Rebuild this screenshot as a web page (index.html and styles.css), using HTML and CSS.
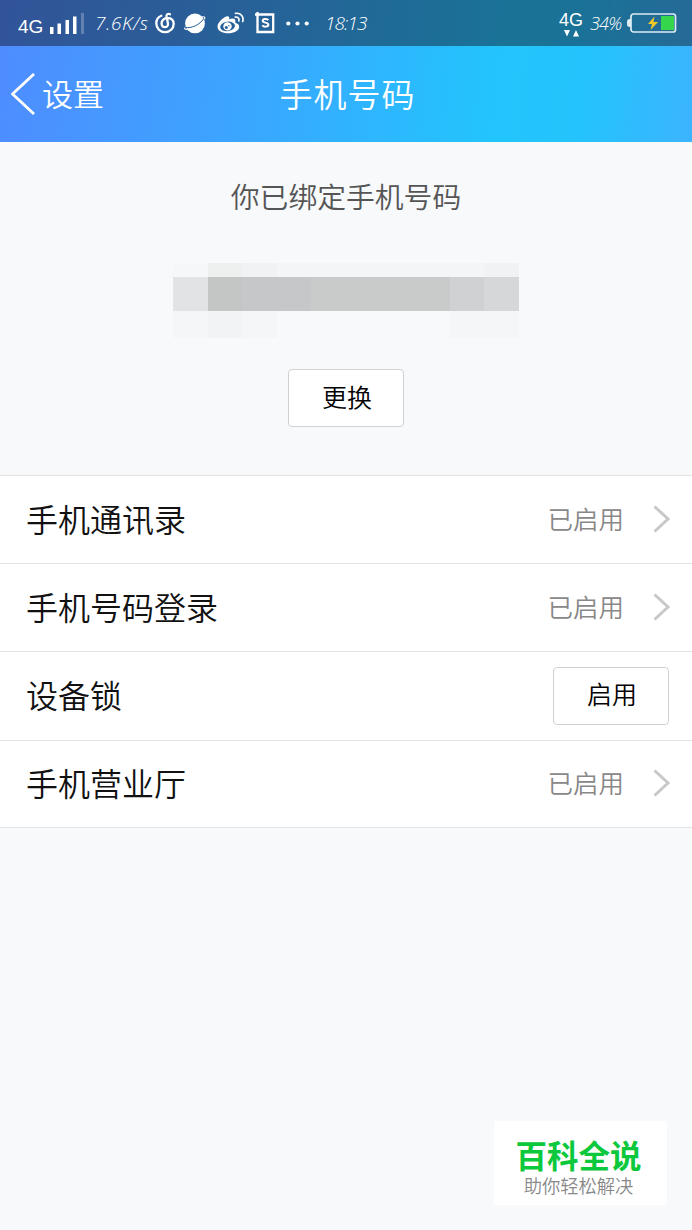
FILE: index.html
```html
<!DOCTYPE html>
<html lang="zh-CN">
<head>
    <meta charset="UTF-8">
    <meta name="viewport" content="width=device-width, initial-scale=1.0">
    <title>手机号码</title>
    <link rel="stylesheet" href="styles.css">
</head>
<body>
    <header class="top">
        <div class="status-bar">
            <div class="status-left">
                <span class="network">4G</span>
                <svg class="signal" width="34" height="22" viewBox="0 0 34 22">
                    <path fill="#fff" d="M0 14h3.500v7H0zM7.500 10.500H11V21H7.500zM15.500 7H19v14h-3.500zM23 3.500h3.500V21H23z"/>
                    <path fill="#fff" opacity=".25" d="M31 0h3v21h-3z"/>
                </svg>
                <span class="speed">7.6K/s</span>
                <svg class="icon-music" width="20" height="22" viewBox="0 0 20 22" fill="none" stroke="#fff" stroke-linecap="round">
                    <path stroke-width="2.300" d="M6.300 3.800C3.200 5 1.300 8.100 1.300 11.600c0 4.900 3.900 8.600 8.700 8.600s8.700-3.700 8.700-8.500c0-3.300-2.300-5.700-6-5.700C9 6 6.600 8.500 6.600 11.300c0 2.200 1.300 3.900 3.300 3.900 2.200 0 3.400-1.600 3-3.900L11.500 4.300c-.3-1.800 1.500-3.200 3.500-2.100"/>
                </svg>
                <svg class="icon-planet" width="22" height="21" viewBox="0 0 22 21">
                    <circle cx="11" cy="10.400" r="9.900" fill="#fff"/>
                    <path fill="none" stroke="#235f99" stroke-width="1" d="M.8 14.300c6.500 1.700 15.200-2.800 18.900-8.600"/>
                    <path fill="none" stroke="#fff" stroke-width="1.200" d="M1 14.500c-1 2 1 2 3 1.700M18 4c2.500-.8 3.500.4 2.400 2.300"/>
                </svg>
                <svg class="icon-weibo" width="28" height="22" viewBox="0 0 28 22">
                    <path fill="#fff" d="M10 4.300c1.800-.5 2.700.9 2.200 3 2.800-1.200 6.200-1.500 6.200 1.700 0 1-.4 1.500-.1 1.800 2.600.8 3.900 2 3.900 4 0 3.900-5.200 6.500-11 6.500C5.300 21.300.5 18.900.5 14.500c0-4.200 6.300-9.500 9.500-10.200z"/>
                    <ellipse cx="10.600" cy="14.400" rx="7.400" ry="4.700" fill="#236097" transform="rotate(-8 10.600 14.400)"/>
                    <circle cx="10.500" cy="14.400" r="4.200" fill="#fff"/>
                    <circle cx="9.300" cy="15.400" r="1.500" fill="#236097"/>
                    <circle cx="11.900" cy="13.700" r=".7" fill="#236097"/>
                    <path fill="none" stroke="#fff" stroke-width="1.700" stroke-linecap="round" d="M18.500 1.400c5-1 8.600 3.200 7.200 8M18.300 5.100c2.600-.5 4.200 1.500 3.500 3.900"/>
                </svg>
                <svg class="icon-s" width="20" height="22" viewBox="0 0 20 22" fill="none" stroke="#fff">
                    <path stroke-width="2.300" d="M2.500 0v20h15.700V2.500H0"/>
                    <path stroke-width="2" d="M13.300 8.100c-1-1.500-5.600-1.600-5.600.7 0 2.400 5.700 1.300 5.700 4 0 2.300-4.900 2.400-6 .5"/>
                </svg>
                <svg class="icon-more" width="23" height="5" viewBox="0 0 23 5" fill="#fff">
                    <circle cx="2.300" cy="2.500" r="2.100"/>
                    <circle cx="11.500" cy="2.500" r="2.100"/>
                    <circle cx="20.700" cy="2.500" r="2.100"/>
                </svg>
                <span class="clock">18:13</span>
            </div>
            <div class="status-right">
                <div class="data">
                    <span class="data-label">4G</span>
                    <svg width="15" height="7" viewBox="0 0 15 7" fill="#fff">
                        <path d="M0 0h6L3 6.500zM9 6.500h6L12 0z"/>
                    </svg>
                </div>
                <span class="percent">34%</span>
                <svg class="battery" width="50" height="20" viewBox="0 0 50 20">
                    <path fill="#dcecf2" d="M4 6v8H2.500C1 14 0 13 0 11.500v-3C0 7 1 6 2.500 6z"/>
                    <rect x="4" y="1" width="44.500" height="18" rx="2.500" fill="none" stroke="#dcecf2" stroke-width="1.700"/>
                    <path fill="#36d64c" d="M34 3h13v14H34z"/>
                    <path fill="#f5c923" d="M27.500 3.500L21 11h4l-1.500 6L31 9h-4.500z"/>
                </svg>
            </div>
        </div>
        <nav class="nav-bar">
            <a class="back">
                <svg width="26" height="42" viewBox="0 0 26 42" fill="none" stroke="#fff" stroke-width="2.800">
                    <path d="M23 1L1.500 21 23 41"/>
                </svg>
                <span>设置</span>
            </a>
            <h1>手机号码</h1>
        </nav>
    </header>

    <section class="bound">
        <p>你已绑定手机号码</p>
        <!-- masked phone number -->
        <div class="mask">
            <div class="mask-row mask-top">
                <i class="m1"></i><i class="m3"></i><i class="m2"></i><i></i><i></i><i></i><i></i><i></i><i></i><i class="m2"></i>
            </div>
            <div class="mask-row mask-mid">
                <i class="d1"></i><i class="d4"></i><i class="d3"></i><i class="d3"></i><i></i><i></i><i></i><i></i><i class="d2"></i><i class="d5"></i>
            </div>
            <div class="mask-row mask-bottom">
                <i class="b1"></i><i class="b2"></i><i class="b1"></i><i></i><i></i><i></i><i></i><i></i><i class="b1"></i><i class="b1"></i>
            </div>
        </div>
        <button class="btn">更换</button>
    </section>

    <ul class="list">
        <li class="row">
            <span class="label">手机通讯录</span>
            <span class="state">已启用</span>
            <svg class="arrow" width="18" height="28" viewBox="0 0 18 28"><path d="M1.500 1.500L15 14 1.500 26.500"/></svg>
        </li>
        <li class="row">
            <span class="label">手机号码登录</span>
            <span class="state">已启用</span>
            <svg class="arrow" width="18" height="28" viewBox="0 0 18 28"><path d="M1.500 1.500L15 14 1.500 26.500"/></svg>
        </li>
        <li class="row">
            <span class="label">设备锁</span>
            <button class="btn">启用</button>
        </li>
        <li class="row">
            <span class="label">手机营业厅</span>
            <span class="state">已启用</span>
            <svg class="arrow" width="18" height="28" viewBox="0 0 18 28"><path d="M1.500 1.500L15 14 1.500 26.500"/></svg>
        </li>
    </ul>

    <div class="badge">
        <strong>百科全说</strong>
        <span>助你轻松解决</span>
    </div>
</body>
</html>
```
FILE: styles.css
```css
* {
    box-sizing: border-box;
}

body {
    margin: 0;
    position: relative;
    height: 1230px;
    overflow: hidden;
    background-color: #f7f9fb;
    color: #111;
    font-family: "Noto Sans CJK SC", sans-serif;
    font-weight: 350;
}

svg {
    display: block;
    flex: none;
}

.top {
    height: 142px;
    background: linear-gradient(97deg, #4f8cff 0%, #3ca4ff 34%, #22c5fd 72%, #24c3fd 84%, #3cb4ff 100%);
    color: #fff;
}

.status-bar {
    display: flex;
    justify-content: space-between;
    height: 46px;
    padding: 0 15px 0 18px;
    background-color: rgba(18, 22, 36, 0.47);
    line-height: 46px;
    white-space: nowrap;
}

.status-left,
.status-right {
    display: flex;
    align-items: center;
}

.network {
    width: 32px;
    padding-top: 7px;
    font-family: "Liberation Sans", Arial, sans-serif;
    font-size: 19px;
    font-weight: 400;
}

.signal {
    margin-top: 2px;
}

.speed,
.clock,
.percent {
    font-family: "Open Sans", sans-serif;
    font-style: italic;
    font-weight: 300;
}

.speed {
    width: 59px;
    padding-left: 11px;
    font-size: 19px;
    letter-spacing: 0.6px;
}

.icon-music {
    margin-left: 12px;
}

.icon-planet {
    margin-left: 9px;
}

.icon-weibo {
    margin-left: 11px;
}

.icon-s {
    margin-left: 10px;
}

.icon-more {
    margin-left: 11px;
}

.clock {
    margin-left: 16px;
    font-size: 19px;
    letter-spacing: -0.9px;
}

.data {
    width: 26px;
    height: 25px;
    display: flex;
    flex-direction: column;
    align-items: center;
}

.data-label {
    font-family: "Liberation Sans", Arial, sans-serif;
    font-size: 18px;
    font-weight: 400;
    line-height: 19px;
}

.percent {
    width: 34px;
    margin: 0 3px 0 6px;
    font-size: 18px;
    letter-spacing: -0.8px;
}

.nav-bar {
    display: grid;
    grid-template-columns: 1fr auto 1fr;
    align-items: center;
    height: 96px;
    padding: 0 11px;
}

.back {
    display: flex;
    align-items: center;
    font-size: 31px;
    line-height: 40px;
}

.back span {
    margin-left: 5px;
    padding-bottom: 3px;
}

.nav-bar h1 {
    margin: 0;
    padding: 0 0 3px 3px;
    font-size: 33px;
    font-weight: 350;
    line-height: 40px;
    letter-spacing: 1px;
}

.bound {
    display: flex;
    flex-direction: column;
    align-items: center;
    height: 333px;
    padding-top: 34px;
}

.bound p {
    margin: 0;
    color: #555;
    font-size: 28.800px;
    line-height: 40px;
}

.mask {
    width: 346px;
    margin: 47px 0 31px;
}

.mask-row {
    display: grid;
    grid-template-columns: repeat(10, 1fr);
}

.mask-top {
    height: 14px;
}

.mask-mid {
    height: 34px;
    background-color: #c9cbca;
}

.mask-bottom {
    height: 27px;
}

.mask-top i {
    background-color: #f4f5f6;
}

.mask-top .m1 {
    background-color: #f6f7f9;
}

.mask-top .m2 {
    background-color: #f1f2f3;
}

.mask-top .m3 {
    background-color: #eeefef;
}

.mask-mid .d1 {
    background-color: #e2e3e4;
}

.mask-mid .d2 {
    background-color: #d0d1d3;
}

.mask-mid .d3 {
    background-color: #c6c7c9;
}

.mask-mid .d4 {
    background-color: #c4c6c5;
}

.mask-mid .d5 {
    background-color: #d6d7d8;
}

.mask-bottom .b1 {
    background-color: #f5f6f8;
}

.mask-bottom .b2 {
    background-color: #f2f3f4;
}

.btn {
    width: 116px;
    height: 58px;
    padding: 0 0 5px 2px;
    border: 1px solid #d0d1d2;
    border-radius: 4px;
    background-color: #fff;
    color: #000;
    font-family: inherit;
    font-size: 25px;
    font-weight: 350;
}

.list {
    margin: 0;
    padding: 0;
    list-style: none;
    background-color: #fff;
    border-top: 1px solid #e2e3e5;
}

.row {
    display: flex;
    align-items: center;
    height: 88.200px;
    padding: 0 23px 0 26px;
    border-bottom: 1px solid #e2e3e5;
}

.row:last-child {
    height: 87.400px;
}

.label {
    flex: 1;
    padding-bottom: 4px;
    font-size: 32px;
    line-height: 44px;
}

.state {
    margin-right: 29px;
    padding-bottom: 4px;
    color: #888;
    font-size: 25.500px;
}

.arrow {
    margin: 0 -2px 2px 0;
    fill: none;
    stroke: #c8c8c8;
    stroke-width: 3;
}

/* logo card over the bottom right corner */
.badge {
    position: absolute;
    left: 494px;
    top: 1121px;
    display: flex;
    flex-direction: column;
    align-items: center;
    width: 173px;
    height: 84px;
    padding: 13px 4px 0 0;
    background-color: #fff;
}

.badge strong {
    color: #0cc83c;
    font-size: 31.500px;
    font-weight: 700;
    line-height: 40px;
}

.badge span {
    color: #888;
    font-size: 18.300px;
    line-height: 23px;
}
```
